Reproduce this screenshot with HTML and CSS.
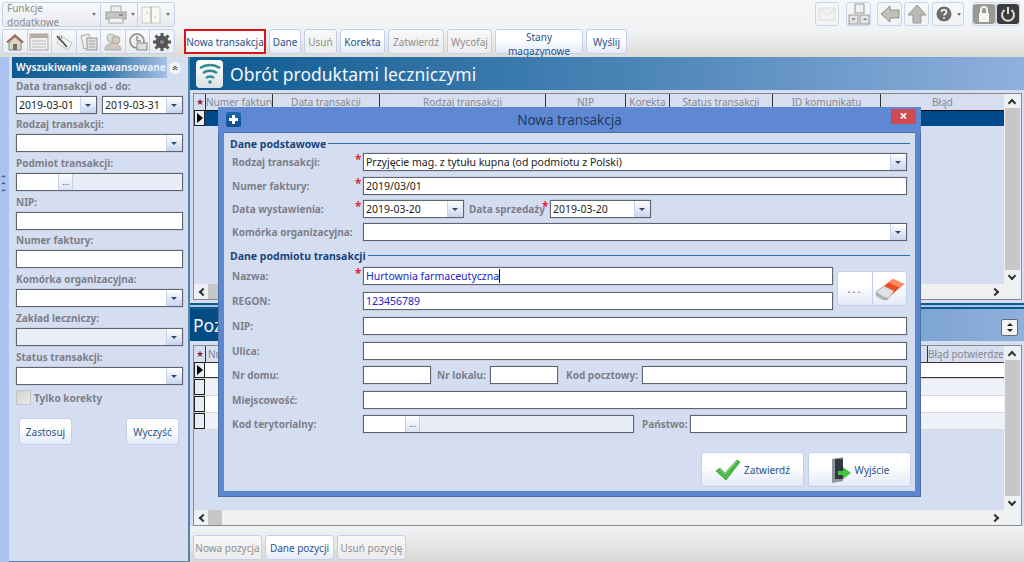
FILE: index.html
```html
<!DOCTYPE html>
<html lang="pl">

<head>
    <meta charset="UTF-8">
    <title>Obrót produktami leczniczymi</title>
    <link rel="stylesheet" href="styles.css">
</head>

<body>
    <div class="app">

        <!-- top toolbar -->
        <div class="topbar">
            <div class="tools">
                <div class="tool-row">
                    <div class="tool-item tool-menu">Funkcje dodatkowe <i class="caret"></i></div>
                    <div class="tool-item tool-print">
                        <svg width="24" height="20" viewBox="0 0 24 20"><rect x="7" y="1" width="10" height="7" fill="#eee" stroke="#aaa"/><rect x="2" y="7" width="20" height="7" fill="#c4c6c4" stroke="#999"/><rect x="5" y="13" width="14" height="5" fill="#f2f2f2" stroke="#aaa"/><rect x="15" y="9" width="4" height="2" fill="#7d9a7d"/></svg>
                        <i class="caret"></i>
                    </div>
                    <div class="tool-item tool-split">
                        <svg width="20" height="20" viewBox="0 0 20 20"><rect x="1" y="2" width="18" height="16" fill="#f7f7f4" stroke="#ccc"/><path d="M10 2v16" stroke="#999"/><path d="M6 7v2M14 11v2" stroke="#bbb"/></svg>
                        <i class="caret"></i>
                    </div>
                </div>
                <div class="tool-row">
                    <div class="icon-btn"><svg width="20" height="20" viewBox="0 0 20 20"><path d="M1 10 10 2l9 8-2 1-7-6-7 6z" fill="#a06a4a"/><path d="M4 10l6-5 6 5v8H4z" fill="#d8d6c8" stroke="#888"/><rect x="8" y="12" width="4" height="6" fill="#6f6f60"/></svg></div>
                    <div class="icon-btn"><svg width="20" height="20" viewBox="0 0 20 20"><rect x="1" y="2" width="18" height="16" fill="#eee" stroke="#aaa"/><rect x="1" y="2" width="18" height="4" fill="#b3b0a2"/><path d="M3 9h14M3 12h14M3 15h14" stroke="#bbb"/></svg></div>
                    <div class="icon-btn"><svg width="20" height="20" viewBox="0 0 20 20"><path d="M6 3l12 8-4 7-11-7z" fill="#f4f4f0" stroke="#bbb"/><path d="M3 4l10 11" stroke="#444" stroke-width="1.6"/><path d="M7 4l1 3" stroke="#a66"/></svg></div>
                    <div class="icon-btn"><svg width="20" height="20" viewBox="0 0 20 20"><path d="M2 4l8-2 3 13-8 2z" fill="#eee" stroke="#aaa"/><rect x="8" y="6" width="10" height="12" fill="#ddd" stroke="#999"/><path d="M10 9h6M10 12h6M10 15h6" stroke="#aaa"/></svg></div>
                    <div class="icon-btn"><svg width="20" height="20" viewBox="0 0 20 20"><circle cx="8" cy="6" r="4" fill="#ddd" stroke="#aaa"/><circle cx="13" cy="8" r="4" fill="#d4c8bc" stroke="#aaa"/><path d="M2 18c0-6 6-7 8-7s7 1 8 7z" fill="#cfc9c0" stroke="#aaa"/></svg></div>
                    <div class="icon-btn"><svg width="20" height="20" viewBox="0 0 20 20"><circle cx="9" cy="9" r="7" fill="#eee" stroke="#888" stroke-width="1.5"/><path d="M9 4v5h4" fill="none" stroke="#666"/><rect x="9" y="11" width="10" height="7" fill="#ddd" stroke="#888"/></svg></div>
                    <div class="icon-btn"><svg width="20" height="20" viewBox="0 0 20 20"><circle cx="10" cy="10" r="6.5" fill="#555"/><path d="M10 1v18M1 10h18M3.5 3.5l13 13M16.5 3.5l-13 13" stroke="#555" stroke-width="3"/><circle cx="10" cy="10" r="2" fill="#888"/></svg></div>
                </div>
            </div>

            <div class="actions">
                <button class="btn btn-marked">Nowa transakcja</button>
                <button class="btn w-dane">Dane</button>
                <button class="btn off w-usun">Usuń</button>
                <button class="btn w-korekta">Korekta</button>
                <button class="btn off w-zatw">Zatwierdź</button>
                <button class="btn off w-wycofaj">Wycofaj</button>
                <button class="btn w-stany">Stany magazynowe</button>
                <button class="btn w-wyslij">Wyślij</button>
            </div>

            <div class="right-tools">
                <div class="icon-box w-mail"><svg width="18" height="14" viewBox="0 0 18 14"><rect x="1" y="1" width="16" height="12" fill="#f2f2ee" stroke="#ddd"/><path d="M1 2l8 6 8-6" fill="none" stroke="#ddd"/></svg></div>
                <div class="icon-box w-net"><svg width="22" height="22" viewBox="0 0 22 22"><rect x="7" y="1" width="9" height="9" fill="#eee" stroke="#999"/><rect x="1" y="12" width="9" height="9" fill="#e4e4e0" stroke="#999"/><rect x="12" y="12" width="9" height="9" fill="#e4e4e0" stroke="#999"/><path d="M4 16h3" stroke="#555"/><path d="M15 17l2-2 2 2z" fill="#777"/></svg></div>
                <div class="icon-box w-back"><svg width="20" height="18" viewBox="0 0 20 18"><path d="M1 9l9-8v4h9v8h-9v4z" fill="#c0c2b8" stroke="#8f9188"/></svg></div>
                <div class="icon-box w-up"><svg width="20" height="20" viewBox="0 0 20 20"><path d="M10 1l9 10h-5v8H6v-8H1z" fill="#b9bab3" stroke="#999"/></svg></div>
                <div class="icon-box w-help"><svg width="16" height="16" viewBox="0 0 16 16"><circle cx="8" cy="8" r="7.5" fill="#6e6e6e"/><path d="M5.5 6c0-3 5-3 5 0 0 2-2.500 2-2.500 3.500" fill="none" stroke="#fff" stroke-width="1.6"/><rect x="7.200" y="11" width="1.600" height="1.800" fill="#fff"/></svg><i class="caret"></i></div>
                <div class="icon-box w-lock"><svg width="22" height="20" viewBox="0 0 22 20"><rect width="22" height="20" rx="3" fill="#9a9a90"/><rect x="6" y="9" width="10" height="9" fill="#f2f2f2"/><path d="M8 9V6a3 3 0 0 1 6 0v3" fill="none" stroke="#f2f2f2" stroke-width="2"/></svg></div>
                <div class="icon-box w-power"><svg width="22" height="20" viewBox="0 0 22 20"><rect width="22" height="20" rx="3" fill="#3c3c3c"/><path d="M7.500 6a6 6 0 1 0 7 0" fill="none" stroke="#ddd" stroke-width="2"/><path d="M11 3v7" stroke="#ddd" stroke-width="2"/></svg></div>
            </div>
        </div>

        <div class="main">
            <div class="strip"><span>‹</span><span>‹</span><span>‹</span></div>

            <!-- search panel -->
            <div class="side">
                <div class="side-head">
                    <div class="side-title">Wyszukiwanie zaawansowane</div>
                    <div class="collapse">«</div>
                </div>

                <div class="sfield sfield-first">
                    <label>Data transakcji od - do:</label>
                    <div class="date-pair">
                        <div class="inp combo"><span class="val">2019-03-01</span><i class="arrow"></i></div>
                        <div class="inp combo"><span class="val">2019-03-31</span><i class="arrow"></i></div>
                    </div>
                </div>
                <div class="sfield">
                    <label>Rodzaj transakcji:</label>
                    <div class="inp combo"><span class="val"></span><i class="arrow"></i></div>
                </div>
                <div class="sfield">
                    <label>Podmiot transakcji:</label>
                    <div class="inp picker"><span class="pick-val short"></span><i class="dots">...</i></div>
                </div>
                <div class="sfield">
                    <label>NIP:</label>
                    <div class="inp"></div>
                </div>
                <div class="sfield sfield-tight">
                    <label>Numer faktury:</label>
                    <div class="inp"></div>
                </div>
                <div class="sfield">
                    <label>Komórka organizacyjna:</label>
                    <div class="inp combo"><span class="val"></span><i class="arrow"></i></div>
                </div>
                <div class="sfield">
                    <label>Zakład leczniczy:</label>
                    <div class="inp combo inp-off"><span class="val"></span><i class="arrow"></i></div>
                </div>
                <div class="sfield">
                    <label>Status transakcji:</label>
                    <div class="inp combo"><span class="val"></span><i class="arrow"></i></div>
                </div>
                <div class="check-row"><i class="check"></i><span>Tylko korekty</span></div>
                <div class="side-btns">
                    <button class="btn">Zastosuj</button>
                    <button class="btn">Wyczyść</button>
                </div>
            </div>

            <!-- transactions -->
            <div class="content">
                <div class="title">
                    <div class="title-icon">
                        <svg width="22" height="22" viewBox="0 0 22 22"><g fill="none" stroke="#2f8a94" stroke-width="2.400"><path d="M1 5c6-4 14-4 20 0"/><path d="M4 10c4-3 10-3 14 0"/><path d="M7 15c2-2 6-2 8 0"/></g><circle cx="11" cy="19" r="1.800" fill="#2f8a94"/></svg>
                    </div>
                    <span>Obrót produktami leczniczymi</span>
                </div>

                <div class="grid grid-top">
                    <div class="grid-body">
                        <div class="grid-head top-cols">
                            <div class="star">★</div>
                            <div>Numer faktury</div>
                            <div>Data transakcji</div>
                            <div>Rodzaj transakcji</div>
                            <div>NIP</div>
                            <div>Korekta</div>
                            <div>Status transakcji</div>
                            <div>ID komunikatu</div>
                            <div>Błąd</div>
                        </div>
                        <div class="sel-row"><i class="row-mark"><b></b></i><div class="sel-fill"></div></div>
                    </div>
                    <div class="vscroll"><i class="up"></i><div class="thumb thumb-long"></div><i class="down"></i></div>
                    <div class="hscroll"><i class="left"></i><div class="hthumb"></div><i class="right"></i></div>
                </div>

                <div class="split"></div>

                <div class="title title-sub">
                    <span>Pozycje transakcji</span>
                    <div class="expand"><i></i><i></i></div>
                </div>

                <div class="grid grid-bottom">
                    <div class="grid-body">
                        <div class="grid-head bottom-cols">
                            <div class="star">★</div>
                            <div class="left-txt">Nr</div>
                            <div class="end-txt">Błąd potwierdzen</div>
                        </div>
                        <div class="data-row first"><i class="row-mark"><b></b></i><div></div></div>
                        <div class="data-row alt"><i class="row-mark"></i><div></div></div>
                        <div class="data-row"><i class="row-mark"></i><div></div></div>
                        <div class="data-row alt"><i class="row-mark"></i><div></div></div>
                    </div>
                    <div class="vscroll"><i class="up"></i><div class="thumb"></div><i class="down"></i></div>
                    <div class="hscroll"><i class="left"></i><div class="hthumb"></div><i class="right"></i></div>
                </div>

                <div class="bottom-btns">
                    <button class="btn off">Nowa pozycja</button>
                    <button class="btn">Dane pozycji</button>
                    <button class="btn off">Usuń pozycję</button>
                </div>
            </div>
        </div>

        <!-- dialog -->
        <div class="dialog">
            <div class="dlg-title">
                <div class="dlg-icon"></div>
                <span>Nowa transakcja</span>
                <div class="dlg-close">×</div>
            </div>
            <div class="dlg-body">
                <div class="legend"><span>Dane podstawowe</span><i></i></div>
                <div class="drow m2">
                    <label>Rodzaj transakcji:</label><b class="req">*</b>
                    <div class="inp combo grow"><span class="val">Przyjęcie mag. z tytułu kupna (od podmiotu z Polski)</span><i class="arrow"></i></div>
                </div>
                <div class="drow m6">
                    <label>Numer faktury:</label><b class="req">*</b>
                    <div class="inp grow"><span class="val">2019/03/01</span></div>
                </div>
                <div class="drow m5">
                    <label>Data wystawienia:</label><b class="req">*</b>
                    <div class="inp combo date-box"><span class="val">2019-03-20</span><i class="arrow"></i></div>
                    <label class="inline-lbl lbl-sale">Data sprzedaży</label><b class="req">*</b>
                    <div class="inp combo date-box"><span class="val">2019-03-20</span><i class="arrow"></i></div>
                </div>
                <div class="drow m5">
                    <label>Komórka organizacyjna:</label><b class="req"></b>
                    <div class="inp combo grow"><span class="val"></span><i class="arrow"></i></div>
                </div>

                <div class="legend m8"><span>Dane podmiotu transakcji</span><i></i></div>
                <div class="name-block">
                    <div class="name-rows">
                        <div class="drow m4">
                            <label>Nazwa:</label><b class="req">*</b>
                            <div class="inp grow"><span class="val blue">Hurtownia farmaceutyczna</span><i class="cursor"></i></div>
                        </div>
                        <div class="drow m7">
                            <label>REGON:</label><b class="req"></b>
                            <div class="inp grow"><span class="val blue">123456789</span></div>
                        </div>
                    </div>
                    <div class="pick-pair">
                        <div class="pick-dots">...</div>
                        <div class="pick-eraser">
                            <svg width="32" height="26" viewBox="0 0 32 26"><path d="M2 16 19 3l11 5-16 14z" fill="#f04a20"/><path d="M19 3l11 5-4 4-11-5z" fill="#ff8a60"/><path d="M2 16 10 10l10 5-6 8-4 1-7-3z" fill="#dfe1e3" stroke="#9a9ca0" stroke-width=".6"/><path d="M2 16l8 5 4 1v2l-5-1-7-4z" fill="#a8aaad"/></svg>
                        </div>
                    </div>
                </div>
                <div class="drow m7">
                    <label>NIP:</label><b class="req"></b>
                    <div class="inp grow"></div>
                </div>
                <div class="drow m7">
                    <label>Ulica:</label><b class="req"></b>
                    <div class="inp grow"></div>
                </div>
                <div class="drow m6">
                    <label>Nr domu:</label><b class="req"></b>
                    <div class="inp no-box"></div>
                    <label class="inline-lbl lbl-lokal">Nr lokalu:</label>
                    <div class="inp no-box"></div>
                    <label class="inline-lbl lbl-kod">Kod pocztowy:</label>
                    <div class="inp grow"></div>
                </div>
                <div class="drow m7">
                    <label>Miejscowość:</label><b class="req"></b>
                    <div class="inp grow"></div>
                </div>
                <div class="drow m6">
                    <label>Kod terytorialny:</label><b class="req"></b>
                    <div class="inp picker terr-box"><span class="pick-val"></span><i class="dots">...</i></div>
                    <label class="inline-lbl lbl-panstwo">Państwo:</label>
                    <div class="inp grow"></div>
                </div>

                <div class="dlg-footer">
                    <button class="btn big-btn">
                        <svg width="26" height="24" viewBox="0 0 26 24"><path d="M1 13l4-3 5 5L22 2l3 2-14 18z" fill="#4cb848" stroke="#3a9a3a" stroke-width=".8"/><path d="M5 11l5 5L22 3" fill="none" stroke="#9fe68f"/></svg>
                        <span>Zatwierdź</span>
                    </button>
                    <button class="btn big-btn">
                        <svg width="22" height="28" viewBox="0 0 22 28"><path d="M2 3l11-2v24l-11 2z" fill="#8d949c"/><rect x="5" y="3" width="8" height="20" fill="#33393e"/><path d="M8 15h5v-4l8 6-8 6v-4H8z" fill="#3ec63e"/></svg>
                        <span>Wyjście</span>
                    </button>
                </div>
            </div>
        </div>

    </div>
</body>

</html>
```
FILE: styles.css
```css
body {
    margin: 0;
    font-family: "Noto Sans", Tahoma, sans-serif;
    font-size: 10px;
    color: #333;
}

.app {
    position: relative;
    width: 1024px;
    height: 562px;
    overflow: hidden;
    background-color: #d5ddf0;
}

/* top toolbar */
.topbar {
    display: flex;
    height: 57px;
    background: linear-gradient(#f6f7f8 0%, #f1f2f3 55%, #dcdcd7 100%);
}

.tools {
    width: 173px;
    margin: 2px 9px 0 2px;
}

.tool-row {
    display: flex;
    height: 25px;
    margin-bottom: 2px;
    border: 1px solid #c6d0ea;
    border-radius: 3px;
    box-sizing: border-box;
    background: linear-gradient(#f8f9fb, #e9ebf0);
}

.tool-item {
    display: flex;
    align-items: center;
    border-right: 1px solid #c6d0ea;
    color: #8a8a8a;
    font-size: 10px;
}

.tool-item:last-child {
    border-right: none;
}

.tool-menu {
    width: 98px;
    padding-left: 4px;
    box-sizing: border-box;
    justify-content: space-between;
    padding-right: 4px;
}

.tool-print {
    width: 37px;
    padding-left: 3px;
    box-sizing: border-box;
    gap: 3px;
}

.tool-split {
    flex: 1;
    padding-left: 3px;
    gap: 5px;
}

.caret {
    display: inline-block;
    width: 0;
    height: 0;
    border-left: 2px solid transparent;
    border-right: 2px solid transparent;
    border-top: 3px solid #777;
}

.icon-btn {
    flex: 1;
    display: flex;
    align-items: center;
    justify-content: center;
    border-right: 1px solid #c6d0ea;
}

.icon-btn:last-child {
    border-right: none;
}

.actions {
    display: flex;
    gap: 3px;
    margin-top: 29px;
    height: 25px;
}

.btn {
    padding: 0;
    height: 25px;
    border: 1px solid #c3cfec;
    border-radius: 3px;
    background: linear-gradient(#ffffff 40%, #e3e9f7);
    color: #2b5289;
    font-family: inherit;
    font-size: 10px;
}

.btn.off {
    color: #8f8f8f;
    background: linear-gradient(#f8f8f8, #ececec);
}

.btn-marked {
    width: 82px;
    border: 2px solid #d8141c;
    border-radius: 0;
    background: #fcfcfd;
}

.w-dane { width: 32px; }
.w-usun { width: 33px; }
.w-korekta { width: 45px; }
.w-zatw { width: 56px; }
.w-wycofaj { width: 45px; }
.w-stany { width: 88px; }
.w-wyslij { width: 41px; }

.right-tools {
    display: flex;
    margin: 2px 0 0 188px;
    height: 24px;
}

.icon-box {
    display: flex;
    align-items: center;
    justify-content: center;
    height: 24px;
    border: 1px solid #c9d3ea;
    border-radius: 3px;
    box-sizing: border-box;
    gap: 5px;
}

.w-mail { width: 24px; margin-right: 7px; }
.w-net { width: 25px; margin-right: 6px; }
.w-back { width: 25px; margin-right: 2px; }
.w-up { width: 25px; margin-right: 3px; }
.w-help { width: 32px; margin-right: 8px; }
.w-lock { width: 24px; }
.w-power { width: 24px; }

/* main area */
.main {
    display: flex;
    height: 505px;
}

.strip {
    display: flex;
    flex-direction: column;
    align-items: center;
    justify-content: center;
    width: 9px;
    padding-bottom: 252px;
    box-sizing: border-box;
    background-color: #a9c2f0;
    color: #123;
    font-size: 9px;
    line-height: 7px;
}

.strip span {
    transform: rotate(90deg);
}

.side {
    width: 181px;
    padding-right: 1px;
    box-sizing: border-box;
    background-color: #d5ddf0;
    border-right: 2px solid #4f86aa;
    border-bottom: 1px solid #4f86aa;
}

.side-head {
    display: flex;
    align-items: center;
    height: 21px;
    padding-left: 3px;
}

.side-title {
    width: 155px;
    height: 21px;
    padding-left: 4px;
    box-sizing: border-box;
    background: linear-gradient(90deg, #0e5a90, #2f76a8 60%, #a8bfe2);
    color: #e8f0fa;
    font-size: 10px;
    font-weight: bold;
    line-height: 21px;
    white-space: nowrap;
}

.collapse {
    width: 12px;
    height: 12px;
    margin-left: 2px;
    border-radius: 50%;
    background-color: #f2f4f8;
    color: #222;
    font-size: 10px;
    line-height: 10px;
    text-align: center;
    transform: rotate(90deg);
}

.sfield {
    margin: 3px 4px 0 7px;
}

.sfield-first {
    margin-top: 0;
    margin-bottom: -1px;
}

.sfield-tight {
    margin-top: 2px;
}

.sfield label {
    display: block;
    height: 18px;
    line-height: 16px;
}

label {
    color: #7d7f88;
    font-size: 10px;
    font-weight: bold;
    white-space: nowrap;
}

.date-pair {
    display: flex;
    justify-content: space-between;
}

.date-pair .inp {
    width: 81px;
}

.inp {
    display: flex;
    align-items: center;
    height: 18px;
    box-sizing: border-box;
    border: 1px solid #5f6570;
    box-shadow: 0 0 1px #8a8f9c;
    background-color: #fff;
    font-size: 11px;
    color: #222;
}

.inp-off {
    background-color: #e9edf6;
}

.val {
    flex: 1;
    padding-left: 2px;
    white-space: nowrap;
    overflow: hidden;
    font-size: 10.5px;
}

.val.blue {
    flex: none;
    color: #2222cc;
}

.cursor {
    width: 1px;
    height: 14px;
    background-color: #111;
}

.arrow {
    position: relative;
    width: 15px;
    height: 16px;
    background: linear-gradient(#fff, #c8d4ee);
    border-left: 1px solid #c8d2ea;
}

.arrow::after {
    content: "";
    position: absolute;
    left: 4px;
    top: 7px;
    border-left: 3px solid transparent;
    border-right: 3px solid transparent;
    border-top: 3px solid #2c4a6e;
}

.picker {
    background-color: #e8ecf7;
}

.pick-val {
    display: block;
    width: 41px;
    height: 16px;
    background-color: #fff;
}

.dots {
    width: 13px;
    height: 16px;
    background: linear-gradient(#fff, #dbe3f5);
    border: solid #c3cfec;
    border-width: 0 1px;
    color: #3a5a8a;
    font-size: 9px;
    font-style: normal;
    line-height: 16px;
    text-align: center;
}

.check-row {
    display: flex;
    align-items: center;
    gap: 3px;
    margin: 5px 0 0 7px;
    color: #7d7f88;
    font-weight: bold;
    font-size: 10px;
}

.check {
    width: 15px;
    height: 15px;
    box-sizing: border-box;
    border: 1px solid #c4c4c4;
    background: linear-gradient(135deg, #cfcfcf, #ededed);
}

.side-btns {
    display: flex;
    justify-content: space-between;
    margin: 13px 8px 0 10px;
}

.side-btns .btn {
    width: 53px;
    height: 27px;
}

.content {
    flex: 1;
    display: flex;
    flex-direction: column;
    min-width: 0;
}

.title {
    display: flex;
    align-items: center;
    flex: none;
    height: 33px;
    background: linear-gradient(90deg, #0d5a90, #4d86b8 55%, #90b0dd);
    color: #f2f6fb;
    font-size: 17.500px;
}

.title-icon {
    display: flex;
    align-items: center;
    justify-content: center;
    width: 27px;
    height: 28px;
    margin: 0 7px 0 6px;
    border-radius: 4px;
    background: linear-gradient(#ffffff, #d8e2e6);
}

.title-sub {
    position: relative;
    height: 32px;
    padding-left: 3px;
    background: linear-gradient(90deg, #004a84, #4d86b8 55%, #90b0dd);
}

.expand {
    position: absolute;
    right: 6px;
    top: 10px;
    display: flex;
    flex-direction: column;
    justify-content: center;
    gap: 3px;
    align-items: center;
    width: 17px;
    height: 17px;
    box-sizing: border-box;
    border: 1px solid #667;
    border-radius: 2px;
    background-color: #f2f4f6;
}

.expand i {
    border-left: 3px solid transparent;
    border-right: 3px solid transparent;
    border-bottom: 3px solid #222;
}

.expand i:last-child {
    transform: rotate(180deg);
}

.grid {
    display: grid;
    grid-template-columns: 1fr 17px;
    grid-template-rows: 1fr 15px;
    flex: none;
    margin-left: 3px;
    margin-right: 2px;
    border: 1px solid #88898e;
    box-sizing: border-box;
    background-color: #d5ddf0;
}

.grid-top {
    height: 207px;
    margin-top: 3px;
}

.grid-bottom {
    height: 181px;
    margin-top: 4px;
}

.grid-body {
    overflow: hidden;
    min-width: 0;
}

.grid-head {
    display: grid;
    height: 16px;
    color: #85878e;
    font-size: 10px;
    line-height: 16px;
    text-align: center;
    white-space: nowrap;
    background-color: #d7deef;
}

.grid-head > div {
    border-right: 1px solid #333;
    box-sizing: border-box;
    overflow: hidden;
}

.grid-head > div:last-child {
    border-right: none;
}

.top-cols {
    grid-template-columns: 12px 67px 107px 166px 80px 44px 103px 108px 1fr;
}

.bottom-cols {
    grid-template-columns: 12px 1fr 76px;
}

.star {
    color: #8a2a3a;
    font-size: 9px;
}

.left-txt {
    text-align: left;
    padding-left: 2px;
}

.end-txt {
    text-align: right;
}

.sel-row {
    display: flex;
    height: 16px;
}

.sel-fill {
    flex: 1;
    background-color: #004a8c;
    border-top: 1px solid #111;
}

.row-mark {
    position: relative;
    display: block;
    width: 11px;
    box-sizing: border-box;
    border: solid #222;
    border-width: 1px 1px 1px 1px;
    background-color: #e8ebf4;
}

.row-mark b {
    position: absolute;
    left: 2px;
    top: 2px;
    border-top: 5px solid transparent;
    border-bottom: 5px solid transparent;
    border-left: 6px solid #000;
}

.data-row {
    display: flex;
    height: 17px;
    border-bottom: 1px solid #d8d8d8;
    box-sizing: border-box;
}

.data-row > div {
    flex: 1;
    background-color: #fff;
}

.data-row.alt > div {
    background-color: #eff1f8;
}

.data-row.first > div {
    border-bottom: 1px solid #333;
    border-top: 1px solid #333;
}

.vscroll {
    display: flex;
    flex-direction: column;
    background-color: #eef0f4;
}

.thumb {
    flex: 1;
    margin: 0 1px;
    background-color: #c7c7c7;
}

.up,
.down {
    height: 14px;
    flex: none;
    position: relative;
}

.up::after,
.down::after,
.left::after,
.right::after {
    content: "";
    position: absolute;
    width: 4px;
    height: 4px;
    border: solid #333;
    border-width: 2px 0 0 2px;
}

.up::after {
    left: 5px;
    top: 6px;
    transform: rotate(45deg);
}

.down::after {
    left: 5px;
    top: 3px;
    transform: rotate(225deg);
}

.hscroll {
    display: flex;
    grid-column: 1 / 3;
    align-items: stretch;
    background-color: #eef0f2;
}

.left,
.right {
    position: relative;
    width: 14px;
    flex: none;
}

.left::after {
    left: 6px;
    top: 5px;
    transform: rotate(-45deg);
}

.right::after {
    left: 2px;
    top: 5px;
    transform: rotate(135deg);
}

.hthumb {
    width: 14px;
    background-color: #c7c7c7;
}

.right {
    margin-left: auto;
    margin-right: 17px;
}

.split {
    flex: none;
    height: 6px;
    box-sizing: border-box;
    margin-top: 3px;
    border-top: 2px solid #0d5a8c;
    border-bottom: 2px solid #0d5a8c;
    background-color: #a8c4e8;
}

.bottom-btns {
    display: flex;
    flex: 1;
    gap: 3px;
    padding: 9px 0 0 3px;
    background: linear-gradient(#f2f3f5, #d8d9d6);
}

.bottom-btns .btn {
    width: 69px;
}

/* dialog */
.dialog {
    position: absolute;
    left: 218px;
    top: 107px;
    width: 703px;
    height: 390px;
    box-sizing: border-box;
    border: 6px solid #5b86d0;
    border-top: none;
    outline: 1px solid #4d6f9e;
    outline-offset: -1px;
    background-color: #5b86d0;
}

.dlg-title {
    position: relative;
    height: 25px;
    margin: 0 -6px;
    color: #24395c;
    font-size: 13.500px;
    line-height: 27px;
    text-align: center;
    background-color: #5f88d4;
}

.dlg-icon {
    position: absolute;
    left: 8px;
    top: 5px;
    width: 15px;
    height: 15px;
    border-radius: 2px;
    background:
        linear-gradient(#fff, #fff) center / 9px 3px no-repeat,
        linear-gradient(#fff, #fff) center / 3px 9px no-repeat,
        linear-gradient(#1c69b0, #0f4f8f);
}

.dlg-close {
    position: absolute;
    right: 5px;
    top: 2px;
    width: 25px;
    height: 15px;
    background-color: #cf4b4f;
    color: #fff;
    font-size: 14px;
    font-weight: bold;
    line-height: 14px;
}

.dlg-body {
    height: 359px;
    padding-left: 7px;
    box-sizing: border-box;
    background-color: #d5ddf0;
    border-top: 1px solid #4a6f9e;
}

.legend {
    display: flex;
    align-items: center;
    height: 14px;
    margin-top: 4px;
    margin-right: 5px;
    margin-left: -1px;
    color: #17457c;
    font-size: 10.500px;
    font-weight: bold;
}

.legend i {
    flex: 1;
    height: 1px;
    margin: 0 0 1px 2px;
    background-color: #2f6ea8;
}

.legend.m8 {
    margin-top: 8px;
}

.drow {
    display: flex;
    align-items: center;
    height: 18px;
    margin-right: 8px;
}

.drow > label:first-child {
    width: 124px;
    padding-left: 1px;
    box-sizing: border-box;
}

.req {
    width: 8px;
    flex: none;
    height: 18px;
    color: #e02a3a;
    font-size: 12px;
    line-height: 14px;
}

.grow {
    flex: 1;
    min-width: 0;
}

.m2 { margin-top: 2px; }
.m4 { margin-top: 4px; }
.m5 { margin-top: 5px; }
.m6 { margin-top: 6px; }
.m7 { margin-top: 7px; }

.date-box {
    width: 101px;
}

.lbl-sale {
    width: 78px;
    padding-left: 5px;
    box-sizing: border-box;
}

.no-box {
    width: 68px;
}

.lbl-lokal {
    width: 59px;
    padding-left: 6px;
    box-sizing: border-box;
}

.lbl-kod {
    width: 84px;
    padding-left: 8px;
    box-sizing: border-box;
}

.terr-box {
    width: 271px;
}

.lbl-panstwo {
    width: 56px;
    padding-left: 8px;
    box-sizing: border-box;
}

.name-block {
    display: flex;
}

.name-rows {
    width: 602px;
}

.name-rows .drow {
    margin-right: 0;
}

.pick-pair {
    display: flex;
    width: 70px;
    height: 35px;
    margin: 8px 0 0 4px;
    box-sizing: border-box;
    border: 1px solid #c3cfec;
    border-radius: 3px;
    background: linear-gradient(#ffffff 40%, #e3e9f7);
}

.pick-dots {
    width: 34px;
    border-right: 1px solid #c3cfec;
    color: #555;
    font-size: 11px;
    letter-spacing: 2px;
    line-height: 33px;
    text-align: center;
}

.pick-eraser {
    flex: 1;
    display: flex;
    align-items: center;
    justify-content: center;
}

.dlg-footer {
    display: flex;
    justify-content: flex-end;
    gap: 4px;
    margin: 19px 4px 0 0;
}

.big-btn {
    display: flex;
    align-items: center;
    justify-content: center;
    gap: 3px;
    width: 103px;
    height: 35px;
}
```
